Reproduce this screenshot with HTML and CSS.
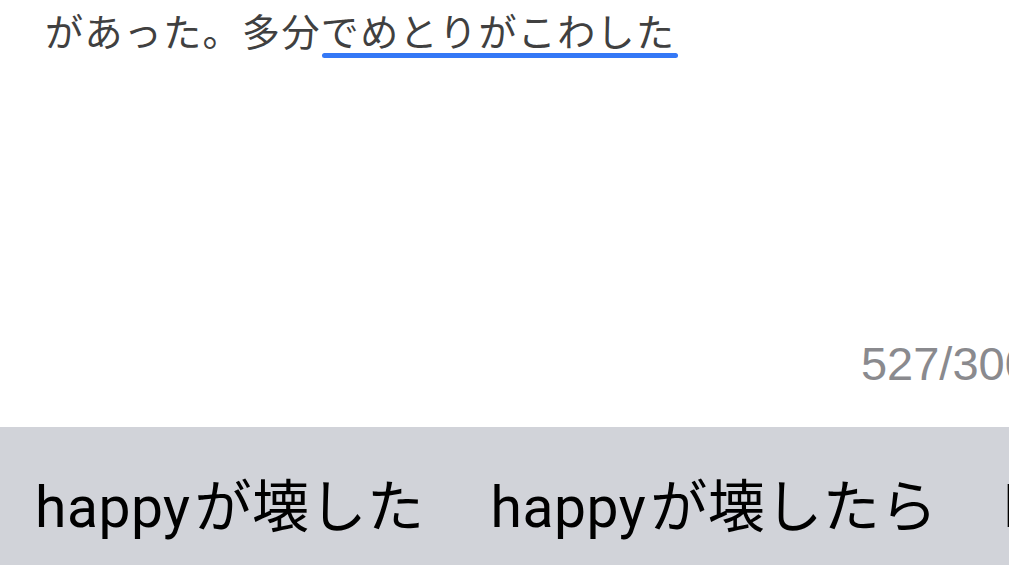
FILE: index.html
```html
<!DOCTYPE html>
<html lang="ja">
<head>
	<meta charset="UTF-8">
	<meta name="viewport" content="width=device-width, initial-scale=1.0">
	<title>メモ</title>
	<link rel="stylesheet" href="styles.css">
</head>
<body>

<div class="editor">
	<p class="memo-text">があった。多分<span class="marked">でめとりがこわした</span></p>
	<div class="counter">527/3000</div>
</div>

<div class="candidates">
	<span class="candidate"><span class="latin">happy</span>が壊した</span>
	<span class="candidate"><span class="latin">happy</span>が壊したら</span>
	<span class="candidate"><span class="latin">happy</span>が壊して</span>
</div>

</body>
</html>
```

FILE: styles.css
```css
html, body {
	margin: 0;
	padding: 0;
}
body {
	width: 1009px;
	height: 565px;
	overflow: hidden;
	background-color: #fff;
	font-family: "Noto Sans CJK JP", sans-serif;
}
.editor {
	height: 427px;
	display: flex;
	flex-direction: column;
	padding-left: 45px;
	box-sizing: border-box;
}
.memo-text {
	margin: 0;
	padding-top: 4px;
	font-size: 38px;
	line-height: 52px;
	letter-spacing: 1.4px;
	color: #404040;
	white-space: nowrap;
}
.marked {
	position: relative;
}
.marked::after {
	content: "";
	position: absolute;
	left: 1px;
	right: -3px;
	bottom: -1px;
	height: 5px;
	border-radius: 3px;
	background-color: #3478f6;
}
.counter {
	margin-top: auto;
	margin-right: -48px;
	padding-bottom: 36px;
	text-align: right;
	font-family: "Liberation Sans", Arial, sans-serif;
	font-size: 47px;
	color: #8a8a8e;
	white-space: nowrap;
}
.candidates {
	height: 138px;
	background-color: #d1d3d9;
	display: flex;
	align-items: center;
	gap: 66px;
	padding-left: 35px;
	white-space: nowrap;
	overflow: hidden;
}
.candidate {
	font-family: Roboto, "Noto Sans CJK JP", sans-serif;
	font-size: 57px;
	line-height: 60px;
	letter-spacing: 0.5px;
	color: #000;
	padding-top: 24px;
}
.latin {
	margin-right: 4px;
}
```
